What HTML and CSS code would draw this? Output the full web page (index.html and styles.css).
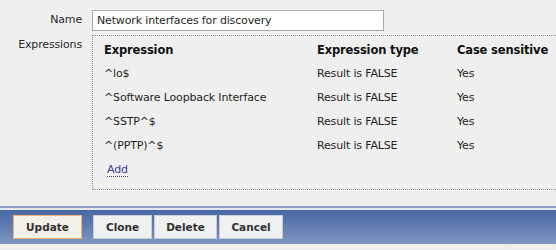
FILE: index.html
```html
<!DOCTYPE html>
<html lang="en">
<head>
  <meta charset="UTF-8" />
  <title>Regular expression</title>
  <link rel="stylesheet" href="styles.css">
</head>
<body>
  <div class="form">
    <div class="form-row">
      <label class="form-label" for="name">Name</label>
      <div class="form-field">
        <input class="text-input" id="name" type="text" value="Network interfaces for discovery">
      </div>
    </div>
    <div class="form-row">
      <div class="form-label">Expressions</div>
      <div class="form-field">
        <div class="expr-box">
          <table class="expr-table">
            <thead>
              <tr>
                <th class="col-expr">Expression</th>
                <th class="col-type">Expression type</th>
                <th>Case sensitive</th>
              </tr>
            </thead>
            <tbody>
              <tr><td>^lo$</td><td>Result is FALSE</td><td>Yes</td></tr>
              <tr><td>^Software Loopback Interface</td><td>Result is FALSE</td><td>Yes</td></tr>
              <tr><td>^SSTP^$</td><td>Result is FALSE</td><td>Yes</td></tr>
              <tr><td>^(PPTP)^$</td><td>Result is FALSE</td><td>Yes</td></tr>
              <tr><td colspan="3"><a class="link-action" href="#">Add</a></td></tr>
            </tbody>
          </table>
        </div>
      </div>
    </div>
  </div>

  <div class="footer">
    <div class="footer-bar">
      <button class="btn btn-update btn-focus">Update</button>
      <div class="btn-group">
        <button class="btn btn-clone">Clone</button>
        <button class="btn btn-delete">Delete</button>
        <button class="btn btn-cancel">Cancel</button>
      </div>
    </div>
  </div>
</body>
</html>
```
FILE: styles.css
```css
body {
  margin: 0;
  background: #efefef;
  font-family: 'DejaVu Sans', Verdana, sans-serif;
  font-size: 11px;
  letter-spacing: -0.15px;
  color: #1f1f1f;
  width: 556px;
  height: 250px;
  overflow: hidden;
}

.form {
  padding-top: 10px;
  height: 196px;
}

.form-row {
  display: flex;
  margin-bottom: 4px;
}

.form-label {
  width: 82px;
  text-align: right;
  padding-right: 10px;
  color: #2a2a2a;
  line-height: 20px;
}

.form-field {
  flex: 1;
}

.text-input {
  box-sizing: border-box;
  width: 292px;
  height: 21px;
  margin: 0;
  padding: 0 4px;
  border: 1px solid #a9a9a9;
  background: #fff;
  font-family: inherit;
  font-size: 11px;
  letter-spacing: -0.15px;
  color: #1f1f1f;
}

.expr-box {
  border: 1px dotted #8c8c8c;
  border-right: none;
  padding: 2px 0 9px 8px;
  height: 142px;
}

.expr-table {
  border-collapse: collapse;
}

.expr-table th,
.expr-table td {
  text-align: left;
  padding: 0 3px;
  height: 24px;
  line-height: 14px;
  white-space: nowrap;
}

.expr-table th {
  font-size: 11.5px;
  font-weight: bold;
  color: #111;
}

.col-expr { width: 207px; }
.col-type { width: 134px; }

.link-action {
  color: #3b3b9a;
  text-decoration: none;
  border-bottom: 1px dotted #3b3b9a;
  margin-left: 3px;
}

.footer {
  border-top: 2px solid #8d9ec2;
  padding-top: 2px;
  background: #e4e6ea;
}

.footer-bar {
  display: flex;
  align-items: center;
  gap: 11px;
  height: 34px;
  padding-left: 13px;
  background: linear-gradient(#4a67a4, #7f96c0);
}

.btn-group {
  display: flex;
  gap: 2px;
}

.btn {
  height: 24px;
  padding: 0;
  border: 1px solid #c4ccd8;
  background: #eef0f1;
  font-family: inherit;
  font-size: 10.5px;
  letter-spacing: 0;
  font-weight: bold;
  color: #333;
}

.btn-update { width: 69px; }
.btn-clone { width: 59px; }
.btn-delete { width: 63px; }
.btn-cancel { width: 64px; }

.btn-focus {
  border-color: #f1b46a;
  background: #f5f1ea;
}
```
